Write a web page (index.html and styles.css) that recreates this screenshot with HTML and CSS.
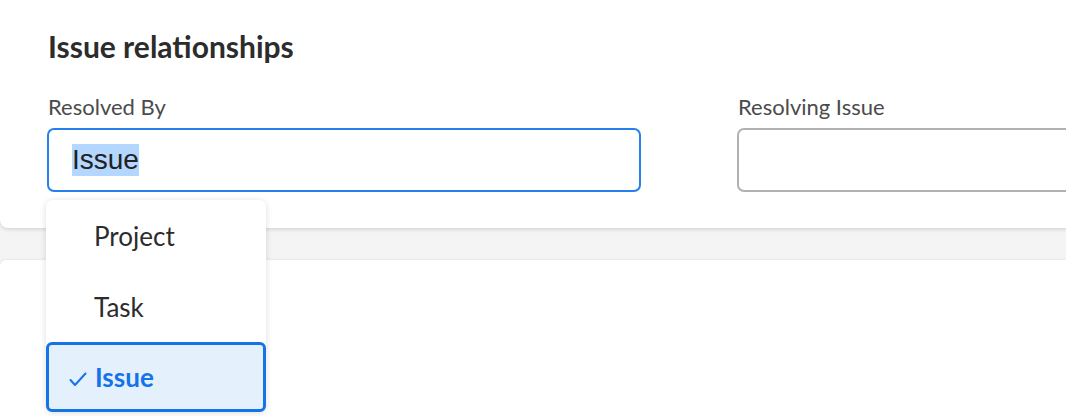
FILE: index.html
```html
<!DOCTYPE html>
<html lang="en">
<head>
<meta charset="utf-8">
<title>Issue relationships</title>
<link rel="stylesheet" href="styles.css">
</head>
<body>
<div class="page">
  <section class="card card-top">
    <h2 class="title">Issue relationships</h2>
    <div class="fields">
      <div class="field">
        <div class="label">Resolved By</div>
        <div class="input input-focused"><span class="selected-text">Issue</span></div>
      </div>
      <div class="field">
        <div class="label">Resolving Issue</div>
        <div class="input"></div>
      </div>
    </div>
  </section>
  <section class="card card-bottom"></section>

  <ul class="menu">
    <li class="menu-item">Project</li>
    <li class="menu-item">Task</li>
    <li class="menu-item is-selected">
      <svg class="check" viewBox="0 0 18 15" width="18" height="15" aria-hidden="true"><path d="M1.5 8 L6 13 L16.5 1.5" fill="none" stroke="#1473e6" stroke-width="2" stroke-linecap="round" stroke-linejoin="round"/></svg>
      <span>Issue</span>
    </li>
  </ul>
</div>
</body>
</html>
```

FILE: styles.css
```css
html, body {
  margin: 0;
  padding: 0;
  background: #f4f4f4;
  overflow: hidden;
}

.page {
  position: relative;
  width: 1066px;
  height: 416px;
  overflow: hidden;
  font-family: Lato, "Open Sans", sans-serif;
  color: #2c2c2c;
}

.card {
  background: #fff;
}

.card-top {
  height: 228px;
  box-sizing: border-box;
  padding: 28px 0 0 47px;
  border-bottom-left-radius: 8px;
  box-shadow: 0 1px 4px rgba(0, 0, 0, 0.16);
  position: relative;
  z-index: 1;
  width: 1400px;
}

.card-bottom {
  margin-top: 32px;
  height: 200px;
  border-top-left-radius: 6px;
  box-shadow: 0 0 3px rgba(0, 0, 0, 0.1);
}

.title {
  margin: 0 0 0 1px;
  font-size: 30px;
  font-weight: 700;
  line-height: 36px;
  color: #2c2c2c;
}

.fields {
  display: flex;
  gap: 96px;
  margin-top: 30px;
}

.field {
  width: 594px;
  flex: none;
}

.label {
  font-size: 22px;
  line-height: 26px;
  color: #4b4b4b;
  margin: 0 0 8px 1px;
}

.input {
  box-sizing: border-box;
  height: 64px;
  border: 2px solid #b1b1b1;
  border-radius: 7px;
  background: #fff;
  display: flex;
  align-items: center;
  padding-left: 23px;
}

.input-focused {
  border-color: #2680eb;
}

.selected-text {
  font-family: "Liberation Sans", Arial, sans-serif;
  font-size: 28px;
  line-height: 32px;
  color: #222;
  background: #b3d7fe;
}

.menu {
  position: absolute;
  z-index: 2;
  left: 46px;
  top: 200px;
  width: 220px;
  margin: 0;
  padding: 0;
  list-style: none;
  background: #fff;
  border-radius: 7px;
  box-shadow: 0 1px 6px rgba(0, 0, 0, 0.14);
}

.menu-item {
  box-sizing: border-box;
  height: 71px;
  display: flex;
  align-items: center;
  padding-left: 48px;
  font-size: 26px;
  color: #2c2c2c;
}

.menu-item.is-selected {
  height: 70px;
  padding-left: 20px;
  border: 3px solid #1473e6;
  border-radius: 6px;
  background: #e5f0fd;
  color: #1473e6;
  font-weight: 700;
  gap: 8px;
}

.check {
  flex: none;
  margin-top: 4px;
}
```
